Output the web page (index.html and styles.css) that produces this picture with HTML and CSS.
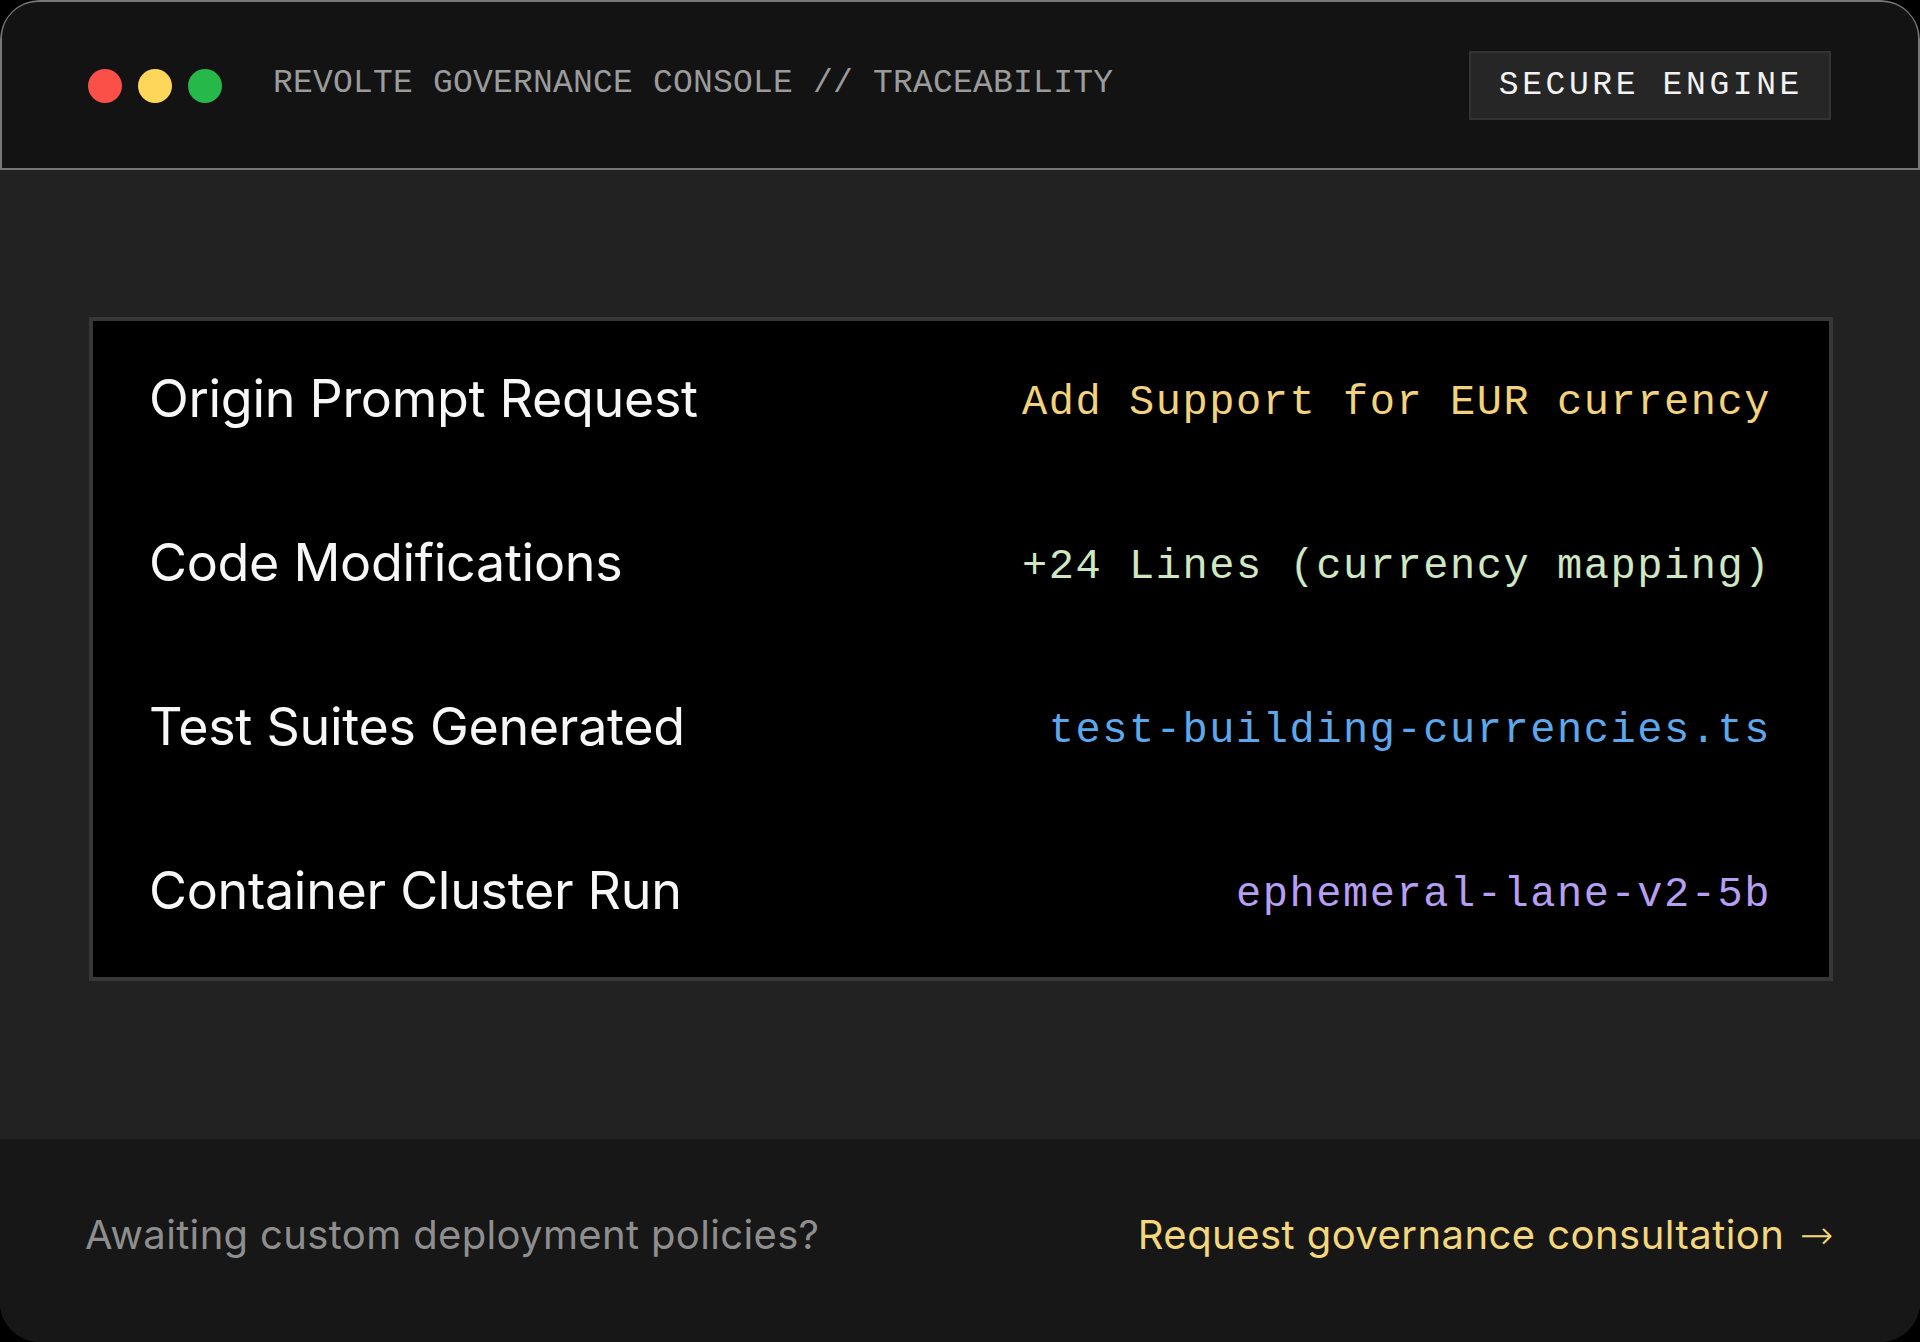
FILE: index.html
```html
<!DOCTYPE html>
<html lang="en">
<head>
<meta charset="utf-8">
<title>Revolte Governance Console</title>
<link rel="stylesheet" href="styles.css">
</head>
<body>
<div class="window">
  <header class="topbar">
    <div class="topbar-left">
      <div class="lights">
        <span class="light light-red"></span>
        <span class="light light-yellow"></span>
        <span class="light light-green"></span>
      </div>
      <div class="title">REVOLTE GOVERNANCE CONSOLE // TRACEABILITY</div>
    </div>
    <div class="badge">SECURE ENGINE</div>
  </header>
  <main class="main">
    <section class="card">
      <div class="row">
        <div class="label">Origin Prompt Request</div>
        <div class="value value-yellow">Add Support for EUR currency</div>
      </div>
      <div class="row">
        <div class="label">Code Modifications</div>
        <div class="value value-green">+24 Lines (currency mapping)</div>
      </div>
      <div class="row">
        <div class="label">Test Suites Generated</div>
        <div class="value value-blue">test-building-currencies.ts</div>
      </div>
      <div class="row">
        <div class="label">Container Cluster Run</div>
        <div class="value value-purple">ephemeral-lane-v2-5b</div>
      </div>
    </section>
  </main>
  <footer class="footer">
    <div class="footer-note">Awaiting custom deployment policies?</div>
    <a class="footer-link" href="#">Request governance consultation <span class="arrow">→</span></a>
  </footer>
</div>
</body>
</html>
```
FILE: styles.css
```css
html, body {
  margin: 0;
  padding: 0;
  background: #000;
  width: 1920px;
  height: 1342px;
  overflow: hidden;
}

.window {
  width: 1920px;
  height: 1342px;
  box-sizing: border-box;
  border-radius: 40px;
  overflow: hidden;
  background: #222222;
  display: flex;
  flex-direction: column;
  font-family: "Inter", "Noto Sans", sans-serif;
}

.topbar {
  height: 170px;
  box-sizing: border-box;
  border: 2px solid #777777;
  border-radius: 38px 38px 0 0;
  background: #131313;
  padding: 0 87px 0 86px;
  display: flex;
  align-items: center;
  justify-content: space-between;
  flex-shrink: 0;
}

.topbar-left {
  display: flex;
  align-items: center;
  gap: 51px;
}

.lights {
  display: flex;
  gap: 16px;
  margin-top: 2px;
}

.light {
  width: 34px;
  height: 34px;
  border-radius: 50%;
  display: block;
}

.light-red { background: #fa5048; }
.light-yellow { background: #fed75a; }
.light-green { background: #27b84a; }

.title {
  font-family: "Liberation Mono", "DejaVu Sans Mono", monospace;
  font-size: 33px;
  color: #9b9b9b;
  letter-spacing: 0.2px;
  margin-top: -4px;
}

.badge {
  font-family: "Liberation Mono", "DejaVu Sans Mono", monospace;
  font-size: 33px;
  letter-spacing: 3.6px;
  color: #f2f2f2;
  background: #262626;
  border: 2px solid #333333;
  height: 69px;
  box-sizing: border-box;
  padding: 0 26px 0 28px;
  display: flex;
  align-items: center;
}

.main {
  flex: 1;
  padding: 147px 87px 0 89px;
}

.card {
  background: #000;
  border: 4px solid #373737;
  display: flex;
  flex-direction: column;
}

.row {
  height: 164px;
  display: flex;
  align-items: center;
  justify-content: space-between;
  padding: 0 58px 0 56px;
}

.label {
  font-size: 52px;
  color: #f7f7f7;
  font-weight: 400;
  letter-spacing: -0.3px;
  margin-bottom: 10px;
}

.value {
  font-family: "Liberation Mono", "DejaVu Sans Mono", monospace;
  font-size: 42px;
  letter-spacing: 1.55px;
}

.value-yellow { color: #f2d27c; }
.value-green { color: #cfe8c2; }
.value-blue { color: #5ca8ec; }
.value-purple { color: #b69ef2; }

.footer {
  height: 203px;
  flex-shrink: 0;
  background: #171717;
  display: flex;
  align-items: center;
  justify-content: space-between;
  padding: 0 86px 12px 85px;
  box-sizing: border-box;
}

.footer-note {
  font-size: 40px;
  color: #8e8e8e;
  letter-spacing: 0.35px;
}

.footer-link {
  font-size: 40px;
  color: #f4d77c;
  text-decoration: none;
  letter-spacing: 0.45px;
}

.arrow {
  font-family: "DejaVu Sans", sans-serif;
  font-weight: 300;
  margin-left: 4px;
}
```
